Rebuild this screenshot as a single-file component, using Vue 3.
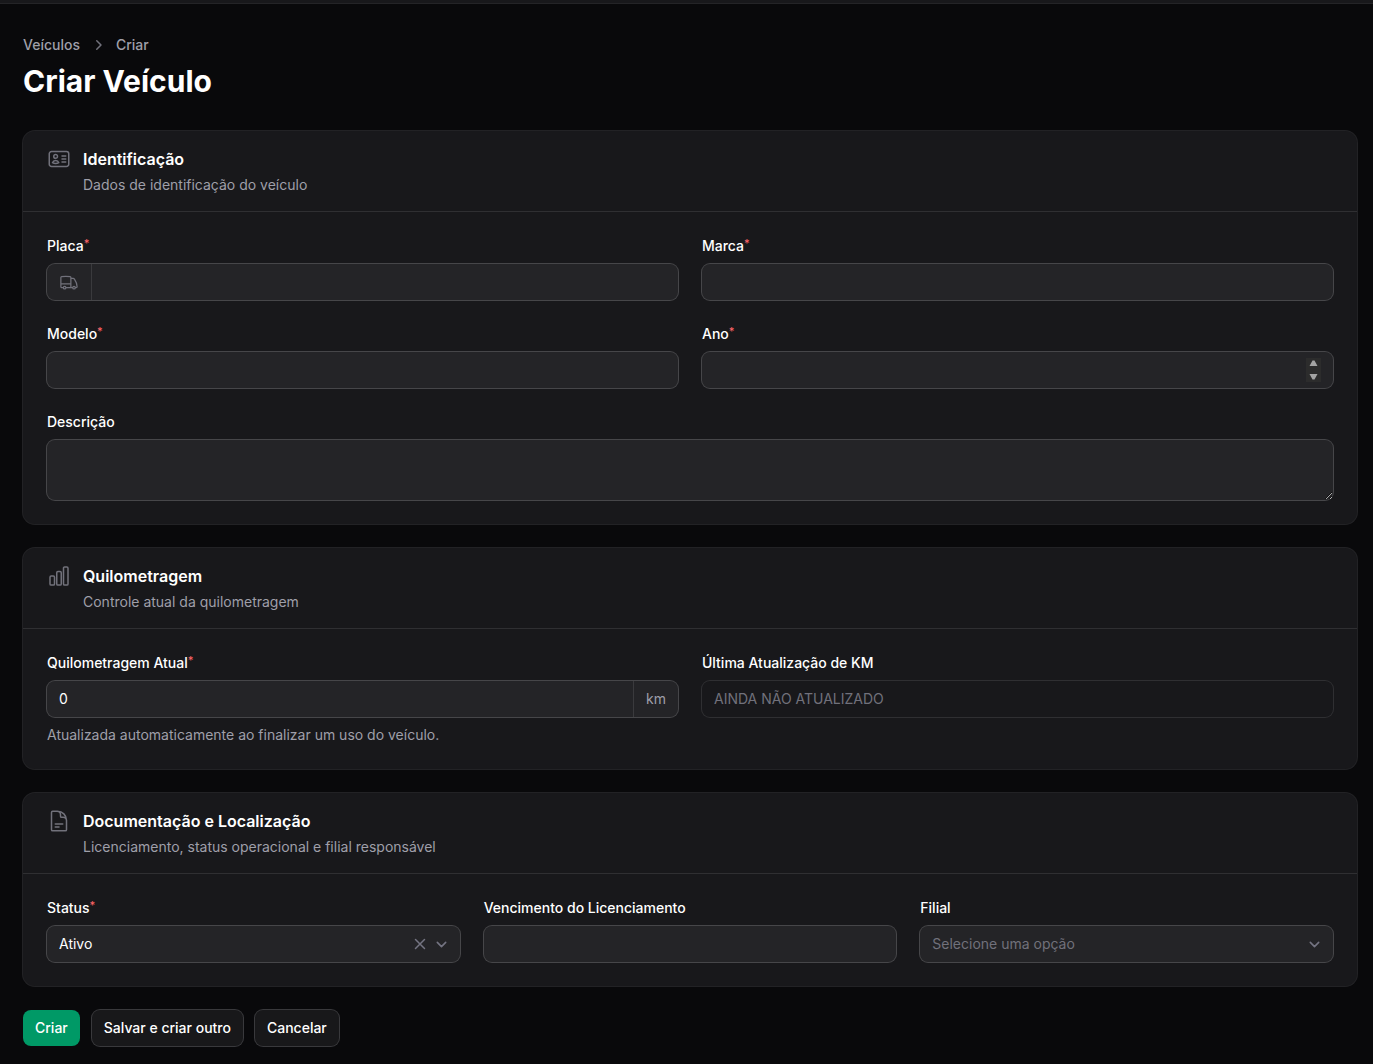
<script setup>
import { ref } from 'vue'

const placa = ref('')
const marca = ref('')
const modelo = ref('')
const ano = ref('')
const descricao = ref('')
const km = ref('0')
const status = ref('ativo')
const vencimento = ref('')
const filial = ref('')
</script>

<template>
  <div class="topbar"></div>
  <main class="page">
    <header class="page-header">
      <nav class="breadcrumbs" aria-label="Breadcrumb">
        <a href="#">Veículos</a>
        <svg viewBox="0 0 20 20" fill="currentColor" aria-hidden="true">
          <path fill-rule="evenodd" clip-rule="evenodd" d="M8.22 5.22a.75.75 0 0 1 1.06 0l4.25 4.25a.75.75 0 0 1 0 1.06l-4.25 4.25a.75.75 0 0 1-1.06-1.06L11.94 10 8.22 6.28a.75.75 0 0 1 0-1.06Z" />
        </svg>
        <a href="#">Criar</a>
      </nav>
      <h1>Criar Veículo</h1>
    </header>

    <form class="form" @submit.prevent>
      <section class="card">
        <header class="card-header">
          <svg class="icon" viewBox="0 0 24 24" aria-hidden="true">
            <path d="M15 9h3.75M15 12h3.75M15 15h3.75M4.5 19.5h15a2.25 2.25 0 0 0 2.25-2.25V6.75A2.25 2.25 0 0 0 19.5 4.5h-15a2.25 2.25 0 0 0-2.25 2.25v10.5A2.25 2.25 0 0 0 4.5 19.5Zm6-10.125a1.875 1.875 0 1 1-3.75 0 1.875 1.875 0 0 1 3.75 0Zm1.294 6.336a6.721 6.721 0 0 1-3.17.789 6.721 6.721 0 0 1-3.168-.789 3.376 3.376 0 0 1 6.338 0Z" />
          </svg>
          <div class="heading">
            <h2>Identificação</h2>
            <p>Dados de identificação do veículo</p>
          </div>
        </header>
        <div class="fields two">
          <div class="field">
            <label for="placa">Placa<sup>*</sup></label>
            <div class="control">
              <span class="prefix">
                <svg class="icon small" viewBox="0 0 24 24" aria-hidden="true">
                  <path d="M8.25 18.75a1.5 1.5 0 0 1-3 0m3 0a1.5 1.5 0 0 0-3 0m3 0h6m-9 0H3.375a1.125 1.125 0 0 1-1.125-1.125V14.25m17.25 4.5a1.5 1.5 0 0 1-3 0m3 0a1.5 1.5 0 0 0-3 0m3 0h1.125c.621 0 1.129-.504 1.09-1.124a17.902 17.902 0 0 0-3.213-9.193 2.056 2.056 0 0 0-1.58-.86H14.25M16.5 18.75h-2.25m0-11.177v-.958c0-.568-.422-1.048-.987-1.106a48.554 48.554 0 0 0-10.026 0 1.106 1.106 0 0 0-.987 1.106v7.635m12-6.677v6.677m0 4.5v-4.5m0 0h-12" />
                </svg>
              </span>
              <input id="placa" v-model="placa" type="text" />
            </div>
          </div>
          <div class="field">
            <label for="marca">Marca<sup>*</sup></label>
            <div class="control">
              <input id="marca" v-model="marca" type="text" />
            </div>
          </div>
          <div class="field">
            <label for="modelo">Modelo<sup>*</sup></label>
            <div class="control">
              <input id="modelo" v-model="modelo" type="text" />
            </div>
          </div>
          <div class="field">
            <label for="ano">Ano<sup>*</sup></label>
            <div class="control">
              <input id="ano" v-model="ano" type="number" />
            </div>
          </div>
          <div class="field full">
            <label for="descricao">Descrição</label>
            <div class="control">
              <textarea id="descricao" v-model="descricao" rows="2"></textarea>
            </div>
          </div>
        </div>
      </section>

      <section class="card">
        <header class="card-header">
          <svg class="icon" viewBox="0 0 24 24" aria-hidden="true">
            <path d="M3 13.125C3 12.504 3.504 12 4.125 12h2.25c.621 0 1.125.504 1.125 1.125v6.75C7.5 20.496 6.996 21 6.375 21h-2.25A1.125 1.125 0 0 1 3 19.875v-6.75ZM9.75 8.625c0-.621.504-1.125 1.125-1.125h2.25c.621 0 1.125.504 1.125 1.125v11.25c0 .621-.504 1.125-1.125 1.125h-2.25a1.125 1.125 0 0 1-1.125-1.125V8.625ZM16.5 4.125c0-.621.504-1.125 1.125-1.125h2.25C20.496 3 21 3.504 21 4.125v15.75c0 .621-.504 1.125-1.125 1.125h-2.25a1.125 1.125 0 0 1-1.125-1.125V4.125Z" />
          </svg>
          <div class="heading">
            <h2>Quilometragem</h2>
            <p>Controle atual da quilometragem</p>
          </div>
        </header>
        <div class="fields two">
          <div class="field">
            <label for="km">Quilometragem Atual<sup>*</sup></label>
            <div class="control">
              <input id="km" v-model="km" type="text" inputmode="decimal" />
              <span class="suffix">km</span>
            </div>
            <p class="helper">Atualizada automaticamente ao finalizar um uso do veículo.</p>
          </div>
          <div class="field">
            <label for="atualizacao">Última Atualização de KM</label>
            <div class="control disabled">
              <input id="atualizacao" type="text" value="AINDA NÃO ATUALIZADO" disabled />
            </div>
          </div>
        </div>
      </section>

      <section class="card">
        <header class="card-header">
          <svg class="icon" viewBox="0 0 24 24" aria-hidden="true">
            <path d="M19.5 14.25v-2.625a3.375 3.375 0 0 0-3.375-3.375h-1.5A1.125 1.125 0 0 1 13.5 7.125v-1.5a3.375 3.375 0 0 0-3.375-3.375H8.25m0 12.75h7.5m-7.5 3H12M10.5 2.25H5.625c-.621 0-1.125.504-1.125 1.125v17.25c0 .621.504 1.125 1.125 1.125h12.75c.621 0 1.125-.504 1.125-1.125V11.25a9 9 0 0 0-9-9Z" />
          </svg>
          <div class="heading">
            <h2>Documentação e Localização</h2>
            <p>Licenciamento, status operacional e filial responsável</p>
          </div>
        </header>
        <div class="fields three">
          <div class="field">
            <label for="status">Status<sup>*</sup></label>
            <div class="control choice">
              <select id="status" v-model="status">
                <option value=""></option>
                <option value="ativo">Ativo</option>
              </select>
              <button class="clear" type="button" aria-label="Limpar" @click="status = ''">
                <svg viewBox="0 0 20 20" aria-hidden="true">
                  <path d="M5.5 5.5l9 9M14.5 5.5l-9 9" />
                </svg>
              </button>
              <svg class="chevron" viewBox="0 0 20 20" aria-hidden="true">
                <path d="M6 8l4 4 4-4" />
              </svg>
            </div>
          </div>
          <div class="field">
            <label for="vencimento">Vencimento do Licenciamento</label>
            <div class="control">
              <input id="vencimento" v-model="vencimento" type="text" />
            </div>
          </div>
          <div class="field">
            <label for="filial">Filial</label>
            <div class="control choice">
              <select id="filial" v-model="filial" :class="{ empty: !filial }">
                <option value="">Selecione uma opção</option>
              </select>
              <svg class="chevron" viewBox="0 0 20 20" aria-hidden="true">
                <path d="M6 8l4 4 4-4" />
              </svg>
            </div>
          </div>
        </div>
      </section>

      <div class="actions">
        <button class="btn primary" type="submit">Criar</button>
        <button class="btn" type="button">Salvar e criar outro</button>
        <button class="btn" type="button">Cancelar</button>
      </div>
    </form>
  </main>
</template>

<style>
body {
  background: #09090b;
  color-scheme: dark;
}
</style>

<style scoped>
* {
  box-sizing: border-box;
}

.topbar {
  height: 4px;
  background: #18181b;
  border-bottom: 1px solid #242427;
}

.page {
  padding: 31px 16px 16px 23px;
  font-family: Inter, sans-serif;
  font-size: 14px;
  line-height: 20px;
  color: #fff;
}

h1, h2, p {
  margin: 0;
}

.page-header {
  display: flex;
  flex-direction: column;
  gap: 8px;
  margin-bottom: 32px;
}

.breadcrumbs {
  display: flex;
  align-items: center;
  gap: 8px;
  font-weight: 500;
  color: #71717b;
}

.breadcrumbs a {
  color: #9f9fa9;
  text-decoration: none;
}

.breadcrumbs svg {
  width: 20px;
  height: 20px;
}

h1 {
  font-size: 30px;
  line-height: 36px;
  font-weight: 700;
}

.form {
  display: flex;
  flex-direction: column;
  gap: 24px;
}

.card {
  background: #18181b;
  border-radius: 12px;
  box-shadow: 0 0 0 1px #222225;
}

.card-header {
  display: flex;
  gap: 12px;
  padding: 16px 24px;
}

.icon {
  flex: none;
  width: 24px;
  height: 24px;
  fill: none;
  stroke: #71717b;
  stroke-width: 1.5;
  stroke-linecap: round;
  stroke-linejoin: round;
}

.icon.small {
  width: 20px;
  height: 20px;
}

.heading {
  display: flex;
  flex-direction: column;
  gap: 4px;
}

h2 {
  font-size: 16px;
  line-height: 24px;
  font-weight: 600;
}

.heading p,
.helper {
  color: #9f9fa9;
}

.fields {
  display: grid;
  align-items: start;
  gap: 24px;
  padding: 24px;
  border-top: 1px solid #2f2f32;
}

.two {
  grid-template-columns: repeat(2, minmax(0, 1fr));
}

.three {
  grid-template-columns: repeat(3, minmax(0, 1fr));
}

.field {
  display: flex;
  flex-direction: column;
  gap: 8px;
}

.full {
  grid-column: 1 / -1;
}

label {
  font-weight: 500;
}

sup {
  font-size: 11px;
  line-height: 0;
  vertical-align: 4px;
  color: #ff6467;
}

.control {
  display: flex;
  background: #242427;
  border-radius: 8px;
  box-shadow: 0 0 0 1px #464649;
}

.control.disabled {
  background: transparent;
  box-shadow: 0 0 0 1px #2f2f32;
}

input,
select,
textarea {
  flex: 1;
  min-width: 0;
  height: 36px;
  margin: 0;
  padding: 0 12px;
  border: 0;
  border-radius: 8px;
  outline: none;
  background: transparent;
  font: inherit;
  color: #fff;
}

input {
  padding-bottom: 2px;
}

input:disabled {
  color: #71717b;
}

input[type='number'] {
  padding-bottom: 0;
}

input::-webkit-inner-spin-button {
  appearance: none;
  width: 15px;
  height: 24px;
  opacity: 1;
  background: #2c2c2c url("data:image/svg+xml,%3Csvg xmlns='http://www.w3.org/2000/svg' viewBox='0 0 15 24'%3E%3Cpath d='M3.5 8 6.5 2.5h2l3 5.5zM3.5 16h8l-3 5.5h-2z' fill='%23a3a3a3'/%3E%3C/svg%3E") center / 15px 24px no-repeat;
}

textarea {
  height: 60px;
  padding: 6px 12px;
  resize: vertical;
}

select {
  appearance: none;
}

select.empty {
  color: #71717b;
}

.prefix,
.suffix {
  display: flex;
  align-items: center;
  padding: 0 12px;
  color: #9f9fa9;
}

.prefix {
  border-right: 1px solid #3a3a3d;
}

.suffix {
  border-left: 1px solid #3a3a3d;
}

.choice {
  align-items: center;
  gap: 1px;
  padding-right: 8px;
}

.clear {
  display: flex;
  padding: 0;
  border: 0;
  background: none;
}

.clear svg {
  width: 20px;
  height: 20px;
}

.chevron {
  flex: none;
  width: 21px;
  height: 21px;
}

.clear svg,
.chevron {
  fill: none;
  stroke: #747482;
  stroke-width: 1.5;
  stroke-linecap: round;
  stroke-linejoin: round;
}

.actions {
  display: flex;
  gap: 12px;
}

.btn {
  padding: 8px 12px;
  border: 0;
  border-radius: 8px;
  background: #18181a;
  box-shadow: 0 0 0 1px #39393c;
  font: inherit;
  font-weight: 500;
  color: #fff;
}

.btn.primary {
  background: #009966;
  box-shadow: none;
}
</style>
